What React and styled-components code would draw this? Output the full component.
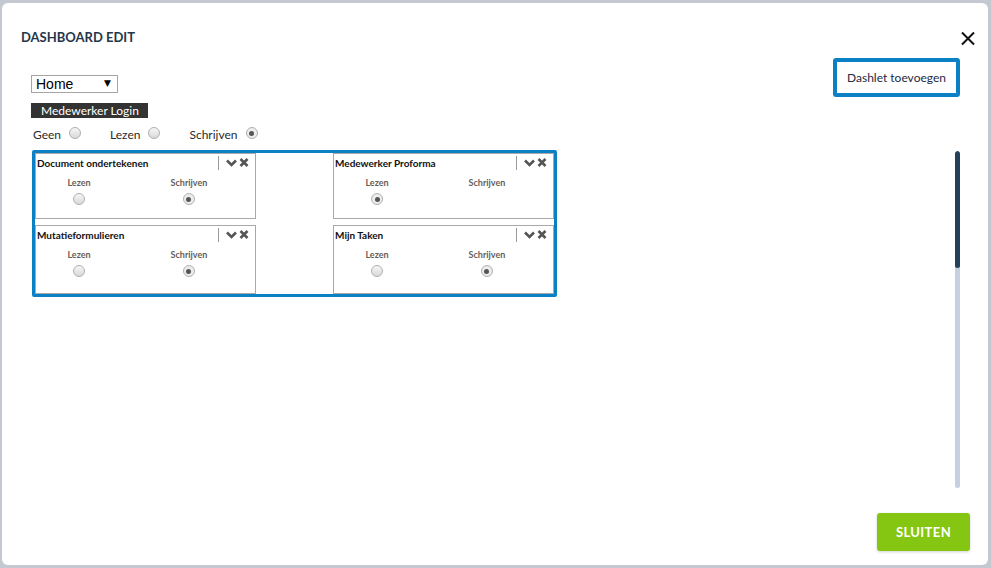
import styled, { createGlobalStyle } from 'styled-components';

const GlobalStyle = createGlobalStyle`
  html, body {
    margin: 0;
    padding: 0;
  }
  body {
    background: #c4c8d1;
    font-family: Lato, "Open Sans", sans-serif;
    overflow: hidden;
  }
`;

const Overlay = styled.div`
  height: 568px;
  box-sizing: border-box;
  padding: 3px 3px 3px 2px;
`;

const Modal = styled.div`
  height: 100%;
  background: #fff;
  border-radius: 6px;
  display: flex;
  flex-direction: column;
`;

const Header = styled.header`
  display: flex;
  justify-content: space-between;
  align-items: flex-start;
  height: 19px;
  padding: 24px 13px 0 19px;
`;

const Title = styled.h1`
  margin: 2px 0 0;
  font-size: 13px;
  line-height: 16px;
  font-weight: 700;
  color: #253649;
`;

const CloseButton = styled.button`
  border: 0;
  background: none;
  padding: 0;
  margin-top: 4px;
  width: 14px;
  height: 15px;
  cursor: pointer;
  display: flex;
`;

const Body = styled.div`
  display: flex;
  align-items: flex-start;
  margin-top: 12px;
`;

const Main = styled.div`
  flex: 1;
  padding: 17px 0 0 29px;
  display: flex;
  flex-direction: column;
  align-items: flex-start;
`;

const SelectWrap = styled.div`
  position: relative;
  width: 87px;
  height: 18px;
`;

const Select = styled.select`
  appearance: none;
  display: block;
  width: 100%;
  height: 100%;
  box-sizing: border-box;
  border: 1px solid #a5a5a5;
  border-radius: 0;
  background: #fff;
  padding: 0 0 0 4px;
  font-family: "Liberation Sans", Arial, sans-serif;
  font-size: 14px;
  line-height: 16px;
  color: #000;
`;

const SelectArrow = styled.span`
  position: absolute;
  right: 7px;
  top: 3px;
  font-family: "DejaVu Sans", sans-serif;
  font-size: 9px;
  line-height: 10px;
  color: #000;
  pointer-events: none;
`;

const RoleTag = styled.div`
  margin-top: 10px;
  height: 15px;
  line-height: 15px;
  padding: 0 9px 0 10px;
  background: #333;
  color: #fff;
  font-size: 12px;
`;

const RightsRow = styled.div`
  margin: 9px 0 0 2px;
  height: 15px;
  display: flex;
  align-items: center;
  gap: 29px;
`;

const RightsOption = styled.label`
  display: flex;
  align-items: center;
  gap: 8px;
  font-size: 12px;
  color: #2a2a2a;
`;

const Radio = styled.input.attrs({ type: 'radio' })`
  appearance: none;
  margin: 0 0 ${({ $raised }) => ($raised ? '3px' : '0')};
  width: 12px;
  height: 12px;
  border-radius: 50%;
  border: 1px solid #b0b0b0;
  background: linear-gradient(#f6f6f6, #d9d9d9);
  box-sizing: border-box;
  display: grid;
  place-items: center;

  &:checked {
    background: #ececec;
  }
  &:checked::after {
    content: '';
    width: 5px;
    height: 5px;
    border-radius: 50%;
    background: #555;
  }
`;

const Frame = styled.div`
  margin: 8px 0 0 1px;
  width: 525px;
  height: 147px;
  box-sizing: border-box;
  border: 3px solid #0b80c4;
  border-radius: 2px;
  display: grid;
  grid-template-columns: 221px 221px;
  grid-template-rows: 66px 69px;
  justify-content: space-between;
  row-gap: 6px;
`;

const Card = styled.div`
  border: 1px solid #a9a9a9;
  box-sizing: border-box;
  display: flex;
  flex-direction: column;
`;

const CardHeader = styled.div`
  height: 17px;
  display: flex;
  align-items: center;
  padding-left: 1px;
`;

const CardTitle = styled.span`
  flex: 1;
  font-size: 10px;
  font-weight: 700;
  color: #111;
`;

const Divider = styled.span`
  width: 1px;
  height: 14px;
  background: #999;
  margin-right: 7px;
`;

const Tools = styled.div`
  display: flex;
  align-items: center;
  gap: 2px;
  margin-right: 6px;
`;

const Options = styled.div`
  display: grid;
  grid-template-columns: 86px 86px;
  column-gap: 24px;
  justify-items: center;
  margin-top: 6px;
`;

const OptionLabel = styled.span`
  font-size: 9px;
  line-height: 12px;
  font-weight: 700;
  color: #66605a;
`;

const OptionCell = styled.div`
  display: flex;
  flex-direction: column;
  align-items: center;
  gap: 4px;
  min-height: 28px;
`;

const Side = styled.aside`
  width: 127px;
  margin-right: 28px;
  display: flex;
  flex-direction: column;
  align-items: flex-end;
`;

const AddButton = styled.button`
  width: 127px;
  height: 39px;
  box-sizing: border-box;
  border: 4px solid #0b80c4;
  border-radius: 3px;
  background: #fff;
  font-family: Lato, "Open Sans", sans-serif;
  font-size: 12px;
  color: #1d2a44;
  cursor: pointer;
`;

const ScrollTrack = styled.div`
  margin-top: 54px;
  width: 5px;
  height: 337px;
  border-radius: 3px;
  background: #c5d1de;
  overflow: hidden;
`;

const ScrollThumb = styled.div`
  height: 117px;
  border-radius: 3px;
  background: #25405b;
`;

const Footer = styled.footer`
  margin-top: auto;
  display: flex;
  justify-content: flex-end;
  padding: 0 18px 14px 0;
`;

const CloseAction = styled.button`
  width: 93px;
  height: 38px;
  border: 0;
  border-radius: 3px;
  background: #84c612;
  color: #fff;
  font-family: Lato, "Open Sans", sans-serif;
  font-size: 13px;
  font-weight: 700;
  letter-spacing: 0.4px;
  box-shadow: 0 1px 3px rgba(0, 0, 0, 0.18);
  cursor: pointer;
`;

// rights: which levels a dashlet offers, and which one is set
const dashlets = [
  { id: 'doc', title: 'Document ondertekenen', levels: ['lezen', 'schrijven'], right: 'schrijven' },
  { id: 'proforma', title: 'Medewerker Proforma', levels: ['lezen'], right: 'lezen' },
  { id: 'mutatie', title: 'Mutatieformulieren', levels: ['lezen', 'schrijven'], right: 'schrijven' },
  { id: 'taken', title: 'Mijn Taken', levels: ['lezen', 'schrijven'], right: 'schrijven' },
];

function ChevronIcon() {
  return (
    <svg width="11" height="8" viewBox="0 0 11 8">
      <polyline points="1,1.5 5.5,6 10,1.5" fill="none" stroke="#555" strokeWidth="2.6" />
    </svg>
  );
}

function RemoveIcon() {
  return (
    <svg width="10" height="9" viewBox="0 0 10 9">
      <path d="M1.5 1 L8.5 8 M8.5 1 L1.5 8" stroke="#555" strokeWidth="2.6" />
    </svg>
  );
}

function DashletCard({ dashlet }) {
  return (
    <Card>
      <CardHeader>
        <CardTitle>{dashlet.title}</CardTitle>
        <Divider />
        <Tools>
          <ChevronIcon />
          <RemoveIcon />
        </Tools>
      </CardHeader>
      <Options>
        {['lezen', 'schrijven'].map((level) => (
          <OptionCell key={level}>
            <OptionLabel>{level === 'lezen' ? 'Lezen' : 'Schrijven'}</OptionLabel>
            {dashlet.levels.includes(level) && (
              <Radio name={dashlet.id} defaultChecked={dashlet.right === level} />
            )}
          </OptionCell>
        ))}
      </Options>
    </Card>
  );
}

export default function App() {
  return (
    <>
      <GlobalStyle />
      <Overlay>
        <Modal>
          <Header>
            <Title>DASHBOARD EDIT</Title>
            <CloseButton aria-label="Sluiten">
              <svg width="14" height="15" viewBox="0 0 14 15">
                <path d="M1 1.5 L13 13.5 M13 1.5 L1 13.5" stroke="#111" strokeWidth="2" />
              </svg>
            </CloseButton>
          </Header>

          <Body>
            <Main>
              <SelectWrap>
                <Select defaultValue="home">
                  <option value="home">Home</option>
                </Select>
                <SelectArrow>▼</SelectArrow>
              </SelectWrap>

              <RoleTag>Medewerker Login</RoleTag>

              <RightsRow>
                <RightsOption>
                  Geen <Radio name="rights" $raised />
                </RightsOption>
                <RightsOption>
                  Lezen <Radio name="rights" $raised />
                </RightsOption>
                <RightsOption>
                  Schrijven <Radio name="rights" $raised defaultChecked />
                </RightsOption>
              </RightsRow>

              <Frame>
                {dashlets.map((d) => (
                  <DashletCard key={d.id} dashlet={d} />
                ))}
              </Frame>
            </Main>

            <Side>
              <AddButton>Dashlet toevoegen</AddButton>
              <ScrollTrack>
                <ScrollThumb />
              </ScrollTrack>
            </Side>
          </Body>

          <Footer>
            <CloseAction>SLUITEN</CloseAction>
          </Footer>
        </Modal>
      </Overlay>
    </>
  );
}
